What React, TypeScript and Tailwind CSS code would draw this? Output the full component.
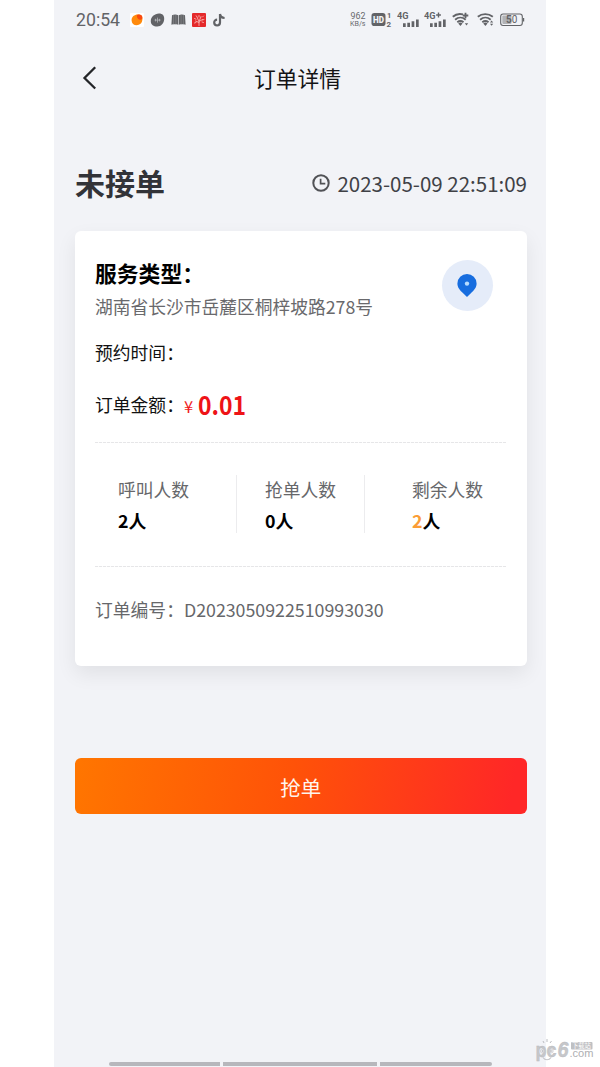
import React from "react";

const G = "#626367";

function StatusLeft() {
  return (
    <div className="flex items-center">
      <span className="w-[46px] font-['Roboto',sans-serif] text-[17.700px] leading-5 text-[#626367]">20:54</span>
      <svg className="ml-[8px]" width="14" height="14" viewBox="0 0 14 14">
        <rect width="14" height="14" rx="1" fill="#fff" />
        <path d="M1.6 7.4C1.4 3.6 4.6 1.4 8 1.500c3 .1 4.700 1.400 4.400 5-.3 3.700-2.700 5.700-5.700 5.700-3 0-5-1.800-5.100-4.800z" fill="#ff8a0c" />
        <path d="M7 2c2.500-1 5.700-.3 5.400 3.200-1 2-3 2-4.200.8C7.200 5 6.400 3 7 2z" fill="#f94a10" />
      </svg>
      <svg className="ml-[6px]" width="15" height="14" viewBox="0 0 15 14">
        <path d="M.8 8.500C.6 4 4.500.6 9 .5c3.500 0 5.400 2.200 5.200 5.500-.2 4.300-3 7.400-6.900 7.500C3.700 13.600 1 11.800.8 8.500z" fill={G} />
        <path d="M7.500 4.600v5M5.500 5.800v2.600M9.500 5.800v2.600M4.600 7.100h6" stroke="#b5b6ba" strokeWidth=".8" />
      </svg>
      <svg className="ml-[6px]" width="15" height="14" viewBox="0 0 15 14">
        <path d="M1 2.300C2.500 1.400 5.500 1.400 7.200 2.200v9.600C5.500 11.200 2.500 11.200.4 11.800zM7.800 2.200c1.700-.8 4.700-.8 6.200.1l.6 9.500c-2.100-.6-5.100-.6-6.800 0z" fill={G} />
        <path d="M2.600 2v9.600M4.900 1.800v9.800M10.100 1.800v9.800M12.400 2v9.600" stroke="#a2a3a7" strokeWidth=".4" />
      </svg>
      <svg className="ml-[6px]" width="14" height="14" viewBox="0 0 14 14">
        <rect width="14" height="14" rx="1" fill="#e4292b" />
        <g stroke="#fbc3c0" strokeWidth=".8" fill="none" strokeLinecap="round">
          <path d="M7 12.500V8M7 9.500L3.500 8M7 8.500L10.500 6.500M6.500 7.500L5 4M7.500 7.500L9 3.500M2.500 5.500l1.500.7M4 2.800l1 .8M7 2.500v1.500M11.500 3l-1 1M12 6.500l-1.500.500M2.500 10l1.500-.5M10 9l1.500 .5" />
        </g>
      </svg>
      <svg className="ml-[7px]" width="13" height="14" viewBox="0 0 13 14">
        <path d="M7 1v8.600a2.900 2.900 0 1 1-2.900-2.900M7 1c.3 2.500 2 3.900 4.600 4" stroke={G} strokeWidth="2.200" fill="none" />
      </svg>
    </div>
  );
}

function Signal({ plus }: { plus?: boolean }) {
  return (
    <svg width="23" height="16" viewBox="0 0 23 16" className={plus ? "ml-[4px]" : "ml-[5px]"}>
      <text x="0" y="7.300" fontSize="8.800" fontWeight="700" fontFamily="Roboto, sans-serif" fill={G} textLength="11.500" lengthAdjust="spacingAndGlyphs">4G</text>
      {plus && <path d="M14.500 .6v4.800M12.100 3h4.800" stroke={G} strokeWidth="1.400" />}
      <path d="M6 15v-3.700h2.700V15zM10.300 15v-4.300H13V15zM14.600 15V9.200h2.700V15zM19 15V7.500h2.700V15z" fill={G} />
    </svg>
  );
}

function Wifi({ plus }: { plus?: boolean }) {
  return (
    <svg width="18" height="15" viewBox="0 0 18 15">
      <g fill="none" stroke={G} strokeWidth="1.900">
        <path d={plus ? "M.8 4.800C3.500 2.300 7.500 1.500 11 2.400" : "M.8 4.800C5 1.200 11.500 1.200 15.800 4.800"} />
        <path d="M3.100 7.700C6.300 4.900 10.500 4.900 13.700 7.700" />
        <path d="M5.300 10.300C7.200 8.800 9.600 8.800 11.500 10.300" />
      </g>
      <path d="M6.300 11.600a3 3 0 0 1 4.200 0l-2.100 2.400z" fill={G} />
      {plus && <path d="M13.500.7v5.600M10.700 3.500h5.600" stroke={G} strokeWidth="1.800" />}
      {plus ? (
        <path d="M12.800 11.300h3.400L14.500 13.600z" fill={G} />
      ) : (
        <path d="M13 10.500l1.600-2 1.600 2zM13 11.800h3.200l-1.600 2z" fill={G} />
      )}
    </svg>
  );
}

function StatusRight() {
  return (
    <div className="flex items-center">
      <svg width="17" height="16" viewBox="0 0 17 16">
        <g fontFamily="Roboto, sans-serif" fill="#68696d">
          <text x="1.500" y="7" fontSize="8.300" textLength="15" lengthAdjust="spacingAndGlyphs">962</text>
          <text x="1" y="14.400" fontSize="7.400" textLength="15.500" lengthAdjust="spacingAndGlyphs">KB/s</text>
        </g>
      </svg>
      <svg className="ml-[5px]" width="21" height="16" viewBox="0 0 21 16">
        <rect x=".5" y="1" width="14" height="13" rx="2.800" fill={G} />
        <text x="2" y="10.900" fontSize="8.500" fontWeight="900" fontFamily="Roboto, sans-serif" fill="#f2f3f7" textLength="11" lengthAdjust="spacingAndGlyphs">HD</text>
        <text x="16" y="6.400" fontSize="7.500" fontWeight="700" fontFamily="Roboto, sans-serif" fill={G}>1</text>
        <text x="15.500" y="14.500" fontSize="8" fontWeight="700" fontFamily="Roboto, sans-serif" fill={G}>2</text>
      </svg>
      <Signal />
      <Signal plus />
      <div className="ml-[5px] flex gap-[7px]">
        <Wifi plus />
        <Wifi />
      </div>
      <svg className="ml-[5px]" width="25" height="14" viewBox="0 0 25 14">
        <rect x=".7" y="1" width="21.600" height="11.500" rx="2.400" fill="none" stroke={G} strokeWidth="1.100" />
        <rect x="2.300" y="2.600" width="9.200" height="8.300" rx=".8" fill="#b1b2b6" />
        <path d="M23.600 5v3.600" stroke={G} strokeWidth="1.200" />
        <text x="6" y="10.400" fontSize="10" fontFamily="Roboto, sans-serif" fill={G}><tspan fontWeight="700">5</tspan>0</text>
      </svg>
    </div>
  );
}

function Dashes() {
  return (
    <div className="h-px w-[411px] bg-[repeating-linear-gradient(90deg,#e6e6e8_0px,#e6e6e8_3px,#fcfcfc_3px,#fcfcfc_4px)]" />
  );
}

function Stat({ label, value, accent }: { label: string; value: string; accent?: boolean }) {
  return (
    <div className="-mt-px">
      <div className="h-[31px] text-[17.800px] leading-[30px] text-[#66676a]">{label}</div>
      <div className="text-[17.800px] font-bold leading-[30px] text-black">
        <span className={accent ? "text-[#fb9d35]" : ""}>{value}</span>人
      </div>
    </div>
  );
}

function Watermark() {
  return (
    <svg className="absolute left-[534px] top-[1038px]" width="62" height="24" viewBox="0 0 62 24">
      <g fontFamily="Liberation Sans, sans-serif" fill="#c6c7ca">
        <g fontWeight="700" stroke="#b9babe" strokeWidth=".4">
          <text x="1.500" y="18.500" fontSize="20" textLength="21" lengthAdjust="spacingAndGlyphs">pc</text>
          <text x="23.500" y="18.700" fontSize="22" fontStyle="italic" textLength="11" lengthAdjust="spacingAndGlyphs">6</text>
        </g>
        <text x="35.500" y="19.300" fontSize="10" textLength="24" lengthAdjust="spacingAndGlyphs" fill="#aeafb2">.com</text>
      </g>
      <path d="M10 5l-1-2M13 4V1M16 5l1.500-2" stroke="#bcbdc1" strokeWidth="1" />
      <path d="M9 19.500c2 3 6 3 8 0" fill="none" stroke="#c5c6ca" strokeWidth="1.200" />
      <circle cx="8.300" cy="13" r="2" fill="#e6e6ea" stroke="#c0c1c5" strokeWidth=".5" />
      <circle cx="17.300" cy="13" r="2" fill="#e6e6ea" stroke="#c0c1c5" strokeWidth=".5" />
      <circle cx="8.700" cy="13" r=".8" fill="#b0b1b5" />
      <circle cx="16.900" cy="13" r=".8" fill="#b0b1b5" />
      <rect x="37" y="4" width="21.500" height="7.500" rx="1" fill="#bfc0c3" />
      <text x="38" y="10" fontSize="6.300" fontFamily="Noto Sans CJK SC, sans-serif" fill="#fff">下载站</text>
    </svg>
  );
}

export default function App() {
  return (
    <div lang="zh-CN" className="relative h-[1067px] w-[600px] overflow-hidden bg-white font-['Noto_Sans_CJK_SC',sans-serif]">
      <main className="ml-[54px] flex h-full w-[492px] flex-col bg-[#f2f3f7]">
        <div className="flex h-[39px] items-center justify-between pl-[22px] pr-[21px]">
          <StatusLeft />
          <StatusRight />
        </div>
        <header className="grid h-[78px] grid-cols-[60px_1fr_60px] items-center">
          <svg className="ml-[28px]" width="16" height="24" viewBox="0 0 16 24">
            <path d="M13.200 1.200L2.500 12l10.700 10.500" fill="none" stroke="#242528" strokeWidth="2.300" />
          </svg>
          <h1 className="pr-[5px] text-center text-[21.800px] leading-8 text-[#141416]">订单详情</h1>
        </header>
        <div className="flex h-[114px] items-end justify-between pl-[21px] pr-[19px]">
          <h2 className="h-[71px] text-[30px] font-bold leading-[44px] text-[#323338]">未接单</h2>
          <div className="flex h-[68px] items-start">
            <svg className="mt-[11px] mr-[7px]" width="18" height="18" viewBox="0 0 18 18">
              <circle cx="9" cy="9" r="7.700" fill="none" stroke="#515256" strokeWidth="2" />
              <path d="M8.600 4.700v5h4.700" fill="none" stroke="#515256" strokeWidth="1.700" />
            </svg>
            <span className="text-[20.500px] leading-[40px] text-[#404146]">2023-05-09 22:51:09</span>
          </div>
        </div>

        <section className="ml-[20.500px] flex h-[435px] w-[452px] flex-col rounded-[6px] bg-white pl-[20.500px] pr-5 shadow-[0_8px_20px_rgba(0,0,0,0.075)]">
          <div className="flex h-[103px] justify-between pt-[25px]">
            <div>
              <h3 className="text-[21.800px] font-bold leading-[33px] text-black">服务类型：</h3>
              <p className="text-[17.750px] leading-[34px] text-[#69696c]">湖南省长沙市岳麓区桐梓坡路278号</p>
            </div>
            <div className="mr-[14px] mt-[4px] flex size-[51px] items-center justify-center rounded-full bg-[#e5ecf9]">
              <svg width="20" height="23" viewBox="0 0 20 23">
                <path d="M10 0a9.600 9.600 0 0 1 9.600 9.600c0 4-2.600 7-6 9.900L10 23l-3.600-3.500C3 16.600.4 13.600.4 9.600A9.600 9.600 0 0 1 10 0z" fill="#176ddf" />
                <circle cx="10" cy="9.600" r="2.200" fill="#b7dcff" />
              </svg>
            </div>
          </div>
          <div className="h-[52px] text-[17.800px] leading-[37px] text-[#111]">预约时间：</div>
          <div className="flex h-[56px] items-start text-[17.800px] leading-[36px] text-[#111]">
            <span>订单金额：</span>
            <span className="mt-[2px] w-[14px] text-[16.500px] text-[#f11a1d]">¥</span>
            <span className="origin-left scale-x-[0.900] text-[25.500px] font-bold text-[#ee1317]">0.01</span>
          </div>
          <Dashes />
          <div className="flex h-[123px] pt-[32px]">
            <div className="h-[58px] w-[142px] border-r border-[#ececee] pl-[23px]">
              <Stat label="呼叫人数" value="2" />
            </div>
            <div className="h-[58px] w-[128px] border-r border-[#ececee] pl-[28px]">
              <Stat label="抢单人数" value="0" />
            </div>
            <div className="pl-[47px]">
              <Stat label="剩余人数" value="2" accent />
            </div>
          </div>
          <Dashes />
          <div className="mt-[24px] text-[17.800px] leading-9 text-[#66676a]">订单编号：D2023050922510993030</div>
        </section>

        <button className="ml-[20.500px] mt-[92px] h-[56px] w-[452.500px] rounded-[6px] bg-[linear-gradient(100deg,#ff7600_0%,#ff5208_48%,#ff2727_96%)] pt-px text-[20.500px] leading-8 text-[#fff5ed]">
          抢单
        </button>
        <div className="mb-px ml-[54.500px] mt-auto flex h-[4px] w-[383px] gap-[3px]">
          <div className="w-[111px] rounded-l-full bg-[#b7b7bc]" />
          <div className="w-[154px] bg-[#b7b7bc]" />
          <div className="w-[112px] rounded-r-full bg-[#b7b7bc]" />
        </div>
      </main>
      <Watermark />
    </div>
  );
}
